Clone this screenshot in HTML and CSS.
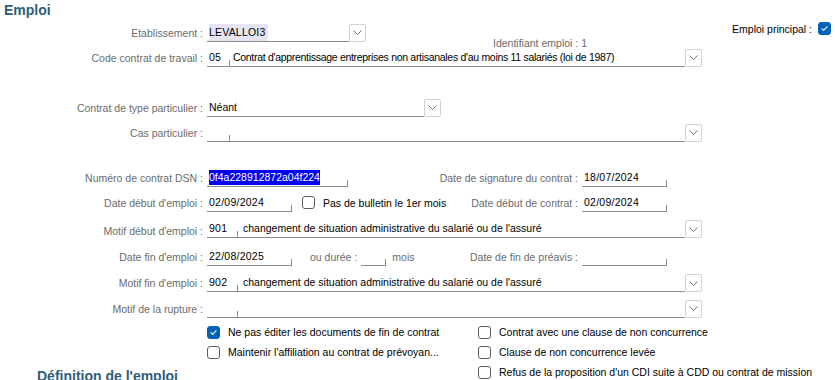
FILE: index.html
```html
<!DOCTYPE html>
<html lang="fr">
    <head>
        <meta charset="utf-8">
        <meta name="viewport" content="width=device-width, initial-scale=1">
        <title>Emploi</title>
        <link rel="stylesheet" href="styles.css">
    </head>
    <body>
        <svg class="defs">
            <symbol id="chev" viewBox="0 0 9 5"><path d="M0.5 0.5 L4.5 4.5 L8.5 0.5" fill="none" stroke="#707070" stroke-width="1"/></symbol>
            <symbol id="check" viewBox="0 0 13 13"><path d="M3.4 6.7 L5.5 8.7 L9.6 4.3" fill="none" stroke="#fff" stroke-width="1.2" stroke-linecap="round" stroke-linejoin="round"/></symbol>
        </svg>

        <div class="page">
            <h2 class="section">Emploi</h2>

            <div class="row">
                <span class="lbl">Etablissement :</span>
                <span class="fld w-etab"><span class="hl">LEVALLOI3</span></span>
                <span class="drop"><svg><use href="#chev"/></svg></span>
                <span class="ident">Identifiant emploi : 1</span>
                <span class="principal">Emploi principal : <span class="cb on"><svg><use href="#check"/></svg></span></span>
            </div>
            <div class="row">
                <span class="lbl">Code contrat de travail :</span>
                <span class="fld code">05</span>
                <span class="fld desc tight">Contrat d'apprentissage entreprises non artisanales d'au moins 11 salariés (loi de 1987)</span>
                <span class="drop"><svg><use href="#chev"/></svg></span>
            </div>

            <div class="row gap-lg">
                <span class="lbl">Contrat de type particulier :</span>
                <span class="fld w-type">Néant</span>
                <span class="drop"><svg><use href="#chev"/></svg></span>
            </div>
            <div class="row">
                <span class="lbl">Cas particulier :</span>
                <span class="fld code"></span>
                <span class="fld desc"></span>
                <span class="drop"><svg><use href="#chev"/></svg></span>
            </div>

            <div class="row gap-md">
                <span class="lbl">Numéro de contrat DSN :</span>
                <span class="fld w-dsn"><span class="sel">0f4a228912872a04f224</span></span>
                <span class="rlbl">Date de signature du contrat :</span>
                <span class="fld date end">18/07/2024</span>
            </div>
            <div class="row">
                <span class="lbl">Date début d'emploi :</span>
                <span class="fld date">02/09/2024</span>
                <span class="opt"><span class="cb"></span>Pas de bulletin le 1er mois</span>
                <span class="rlbl">Date début de contrat :</span>
                <span class="fld date end">02/09/2024</span>
            </div>
            <div class="row r-motif">
                <span class="lbl low">Motif début d'emploi :</span>
                <span class="fld code wide">901</span>
                <span class="fld desc">changement de situation administrative du salarié ou de l'assuré</span>
                <span class="drop"><svg><use href="#chev"/></svg></span>
            </div>
            <div class="row r-fin">
                <span class="lbl">Date fin d'emploi :</span>
                <span class="fld date">22/08/2025</span>
                <span class="lbl-in">ou durée :</span>
                <span class="fld w-duree"></span>
                <span class="lbl-in unit">mois</span>
                <span class="rlbl">Date de fin de préavis :</span>
                <span class="fld date end"></span>
            </div>
            <div class="row r-mid">
                <span class="lbl">Motif fin d'emploi :</span>
                <span class="fld code wide">902</span>
                <span class="fld desc">changement de situation administrative du salarié ou de l'assuré</span>
                <span class="drop"><svg><use href="#chev"/></svg></span>
            </div>
            <div class="row">
                <span class="lbl">Motif de la rupture :</span>
                <span class="fld code wide"></span>
                <span class="fld desc"></span>
                <span class="drop"><svg><use href="#chev"/></svg></span>
            </div>

            <div class="checks">
                <span class="opt col-a"><span class="cb on"><svg><use href="#check"/></svg></span>Ne pas éditer les documents de fin de contrat</span>
                <span class="opt col-b"><span class="cb"></span>Contrat avec une clause de non concurrence</span>
                <span class="opt col-a"><span class="cb"></span>Maintenir l'affiliation au contrat de prévoyan...</span>
                <span class="opt col-b"><span class="cb"></span>Clause de non concurrence levée</span>
                <h2 class="section sub">Définition de l'emploi</h2>
                <span class="opt col-b"><span class="cb"></span>Refus de la proposition d'un CDI suite à CDD ou contrat de mission</span>
            </div>
        </div>
    </body>
</html>
```

FILE: styles.css
```css
html, body {margin: 0}
body {
    font-family: "Liberation Sans", Arial, sans-serif;
    font-size: 10.5px;
    color: #000;
    background: #fff;
    width: 835px;
    height: 380px;
    overflow: hidden;
}
body>svg {
    display: none;
}
.section {
    margin: 0;
    padding-left: 4px;
    height: 20px;
    line-height: 20px;
    font-size: 14px;
    font-weight: bold;
    color: #2f5d78;
}
.row {
    display: flex;
    align-items: center;
    height: 25px;
    white-space: nowrap;
}
.row.gap-lg {margin-top: 25px}
.row.gap-md {margin-top: 20px}
.row.r-motif {height: 28px}
.row.r-fin {height: 27px}
.row.r-mid {height: 26px}
.lbl {
    flex: none;
    width: 203px;
    margin-right: 4px;
    text-align: right;
    color: #6b6b6b;
}
.lbl.low {padding-top: 4px}
.lbl-in {
    color: #6b6b6b;
    margin: 0 4px 0 18px;
}
.lbl-in.unit {margin-left: 6px}
.rlbl {
    margin-left: auto;
    margin-right: 4px;
    color: #6b6b6b;
}

/* underlined edit field with the little tick at its right end */
.fld {
    flex: none;
    box-sizing: border-box;
    height: 18px;
    line-height: 17px;
    padding-left: 2px;
    border-bottom: 1px solid #8c8c8c;
    background: linear-gradient(#8c8c8c, #8c8c8c) right bottom / 1px 6px no-repeat;
    overflow: hidden;
}
.w-etab {width: 142px; background: none}
.w-type {width: 217px; background: none}
.w-dsn {width: 141px}
.w-duree {width: 25px}
.date {width: 85px; letter-spacing: 0.25px}
.date.end {margin-right: 168px}
.code {width: 23px; letter-spacing: 0.25px}
.code.wide {width: 31px}
.desc {
    width: 455px;
    padding-left: 3px;
    background: none;
}
.desc.tight {letter-spacing: -0.3px}
.code.wide + .desc {width: 447px; padding-left: 5px}
.hl {
    display: inline-block;
    background: #e4e4f4;
    padding-right: 3px;
    letter-spacing: 0.2px;
}
.sel {
    display: inline-block;
    background: #0000f5;
    color: #fff;
    line-height: 15px;
}
.drop {
    flex: none;
    box-sizing: border-box;
    width: 17px;
    height: 18px;
    border: 1px solid #d2d2d2;
    border-radius: 2px;
    display: flex;
    align-items: center;
    justify-content: center;
}
.drop svg {
    width: 9px;
    height: 5px;
}
.ident {
    align-self: flex-end;
    margin: 0 0 -4px 127px;
    color: #6b6b6b;
}
.principal {
    align-self: flex-start;
    margin: 2px 4px 0 auto;
    display: flex;
    align-items: center;
    gap: 6px;
}

/* checkboxes */
.cb {
    flex: none;
    box-sizing: border-box;
    width: 13px;
    height: 13px;
    border: 1px solid #5e5e5e;
    border-radius: 3px;
    background: #fff;
}
.cb.on {
    background: #0063b8;
    border-color: #0063b8;
    display: flex;
}
.cb svg {
    width: 11px;
    height: 11px;
}
.opt {
    display: inline-flex;
    align-items: center;
    gap: 8px;
    margin-left: 10px;
}
.checks {
    display: grid;
    grid-template-columns: 207px 271px auto;
    grid-auto-rows: 20px;
    margin-top: 1px;
    white-space: nowrap;
}
.checks .opt {margin-left: 0}
.col-a {grid-column: 2}
.col-b {grid-column: 3}
.section.sub {
    grid-column: 1;
    padding-left: 37px;
    margin-top: 4px;
}
```
